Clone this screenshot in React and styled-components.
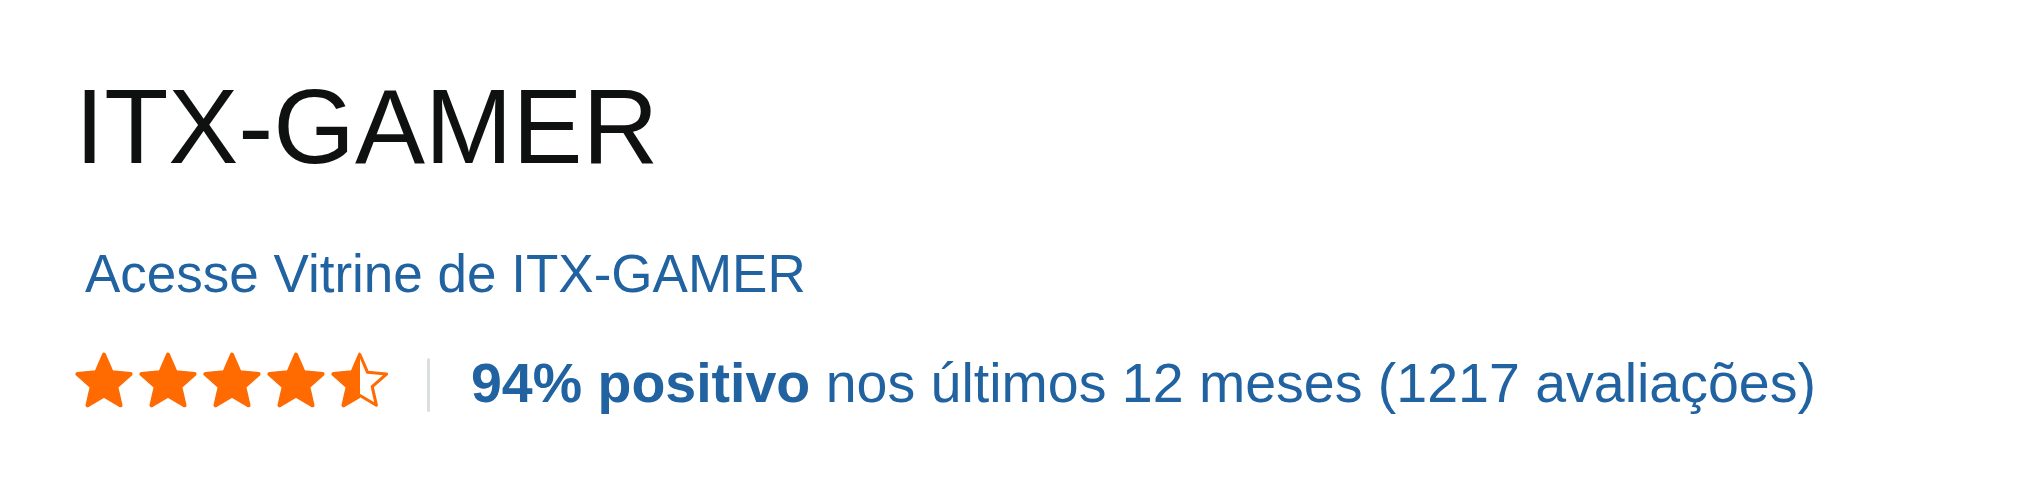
import React from 'react';
import styled, { createGlobalStyle } from 'styled-components';

const Global = createGlobalStyle`
    html, body {
        margin: 0;
        padding: 0;
        background: #ffffff;
    }
    body {
        font-family: 'Liberation Sans', Arial, sans-serif;
    }
`;

const Card = styled.section`
    display: flex;
    flex-direction: column;
    align-items: flex-start;
    padding: 74px 0 0 75px;
    min-height: 426px;
    background: #ffffff;
`;

const Title = styled.h1`
    margin: 0;
    font-size: 105px;
    line-height: 1;
    font-weight: 400;
    color: #0f1111;
`;

const StoreLink = styled.a`
    margin: 68px 0 0 10px;
    font-size: 53px;
    line-height: 1;
    color: #2162a1;
    text-decoration: none;
`;

const RatingRow = styled.div`
    display: flex;
    align-items: flex-start;
    margin-top: 52px;
`;

const Stars = styled.div`
    display: flex;
    gap: 6px;
`;

const Divider = styled.span`
    width: 3px;
    height: 54px;
    margin: 6px 41px 0 38px;
    background: #dcdfe0;
    border-radius: 2px;
`;

const Feedback = styled.p`
    margin: 4px 0 0;
    font-size: 55.5px;
    line-height: 1;
    color: #2162a1;
    white-space: nowrap;
`;

const Strong = styled.b`
    font-weight: 700;
`;

// five-point star, slightly plump inner radius
const STAR = 'M12 2.5L14.7 8.78L21.51 9.41L16.37 13.92L17.88 20.59L12 17.1L6.12 20.59L7.63 13.92L2.49 9.41L9.3 8.78Z';
const ORANGE = '#ff6b00';

// fill: 1 = full star, 0.5 = left half filled with an outlined right half
const Star = ({ fill, id }) => (
    <svg width="58" height="56" viewBox="1.6 1.6 20.8 19.9">
        <defs>
            <clipPath id={id}>
                <rect x="0" y="0" width={fill >= 1 ? 24 : 2.5 + 19 * fill} height="24" />
            </clipPath>
        </defs>
        <path d={STAR} fill="none" stroke={ORANGE} strokeWidth="1.1" strokeLinejoin="round" />
        <path d={STAR} fill={ORANGE} stroke={ORANGE} strokeWidth="1.5" strokeLinejoin="round" clipPath={`url(#${id})`} />
    </svg>
);

const App = () => {
    const rating = [1, 1, 1, 1, 0.5];

    return (
        <>
            <Global />
            <Card>
                <Title>ITX-GAMER</Title>
                <StoreLink href="#">Acesse Vitrine de ITX-GAMER</StoreLink>
                <RatingRow>
                    <Stars>
                        {rating.map((f, i) => (
                            <Star key={i} fill={f} id={`star-clip-${i}`} />
                        ))}
                    </Stars>
                    <Divider />
                    <Feedback>
                        <Strong>94% positivo</Strong> nos últimos 12 meses (1217 avaliações)
                    </Feedback>
                </RatingRow>
            </Card>
        </>
    );
};

export default App;
